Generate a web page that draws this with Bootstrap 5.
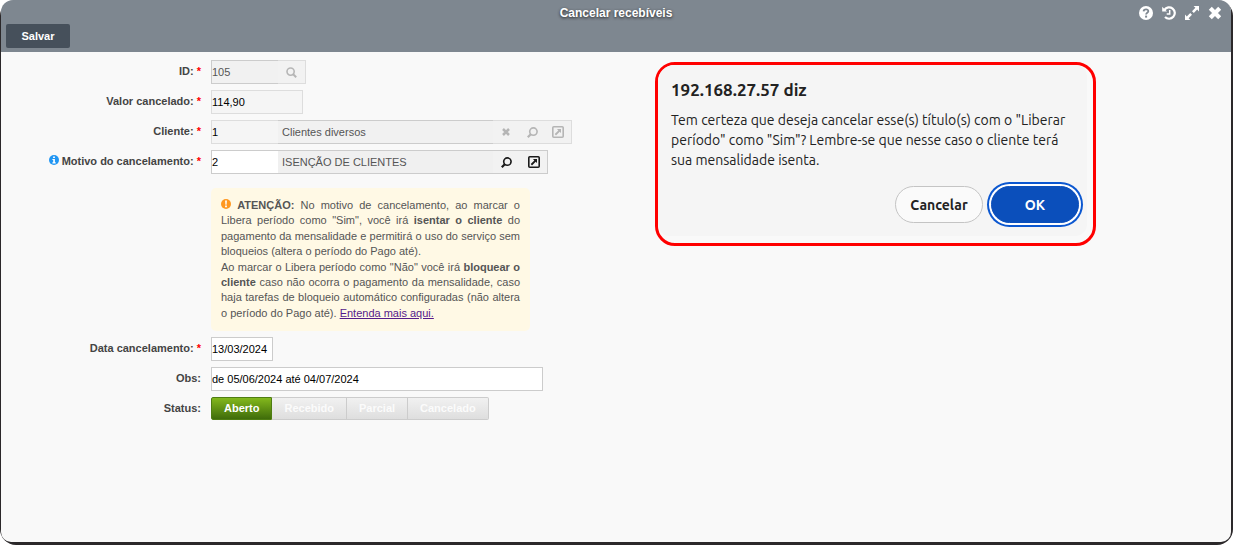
<!DOCTYPE html>
<html lang="pt-BR">
<head>
<meta charset="utf-8">
<meta name="viewport" content="width=device-width, initial-scale=1">
<title>Cancelar recebíveis</title>
<link href="https://cdn.jsdelivr.net/npm/bootstrap@5.3.0/dist/css/bootstrap.min.css" rel="stylesheet">
<style>
body{font-family:"Liberation Sans",Arial,sans-serif;font-size:11px;line-height:22px;color:#444;background:#fff}
.desk{background:#2b282a;border-radius:16px;padding:0 2px 3px 1px}
.window{background:#f9f9f9;border-radius:12px 12px 10px 10px;overflow:hidden}
.titlebar{background:#7e8790;height:52px}
.title-line{display:grid;grid-template-columns:1fr auto 1fr;height:24px}
.window-title{font-size:12px;line-height:26px;font-weight:bold;color:#fff;text-shadow:0 1px 3px #222;margin:0}
.tools{gap:7px;padding:5px 8px 0 0}
.tool-btn{border:0;background:none;padding:0;width:16px;height:16px;display:flex;align-items:center;justify-content:center;color:#fff}
.save-btn{width:64px;height:24px;margin-left:5px;padding:0;border:0;border-radius:2px;background:#46505b;color:#fff;font-size:11px;line-height:24px;font-weight:bold}
.save-btn:hover{background:#3a434c;color:#fff}
.content-area{padding-top:8px}
.form-side{flex:0 1 654px;min-width:0}
.dialog-side{flex:0 1 441px;min-width:0}
.field-row{display:grid;grid-template-columns:200px minmax(0,1fr);column-gap:10px;margin-bottom:6px;min-height:24px}
.field-label{font-weight:bold;text-align:right;line-height:23px;white-space:nowrap}
.req{color:#f00}
.field-box{border:1px solid #ccc;border-radius:0;background:#fff;height:24px;padding:0;font-size:11px;line-height:22px;color:#000;min-width:0}
.field-box:disabled{background:#f5f5f5;border-color:#ddd;color:#000;opacity:1}
.code{width:67px;border-right:0}
.w-value{width:92px}.w-date{width:62px}.w-obs{width:332px}
.shown-name{width:215px;border-left:0;border-right:0;background:#f0f0f0;padding-left:4px;color:#555}
.shown-name:disabled,.code-grey:disabled{background:#f1f1f1;border-color:#ccc;color:#555}
.lookup{height:24px;border:1px solid #ddd;border-left:0;background:#f2f2f2;color:#b5b5b5}
.lookup.active{border-color:#ccc;color:#1a1a1a}
.lookup button{border:0;background:none;padding:0;width:27px;height:22px;display:flex;align-items:center;justify-content:center;color:inherit}
.lookup.three button{width:26px}
.notice{width:319px;max-width:100%;border:0;border-radius:5px;background:#fff9e5;color:#555;padding:10px;margin:8px 0 0;line-height:1.4;text-align:justify}
.notice a{color:#551a8b}
.states{height:23px}
.states label{height:23px;padding:0 12px;border:1px solid #ccc;border-left-width:0;font-size:11px;line-height:20px;font-weight:bold;color:#fbfbfb;background:linear-gradient(#f1f1f1,#dedede);cursor:pointer}
.states label:last-child{border-radius:0 2px 2px 0}
.states label:first-of-type{border-left-width:1px;border-radius:2px 0 0 2px}
.states .btn-check:checked+label{background:linear-gradient(#83b81d,#3f6c0a);border-color:#4e7d12;color:#fff}
.confirm-frame{border:3px solid #f00;border-radius:20px;padding:0 6px 7px 0;margin-top:2px}
.confirm-box{background:#f5f5f5;border-radius:16px 12px 12px 12px;padding:13px 8px 13px 13px;color:#222;font-family:Ubuntu,Roboto,sans-serif}
.confirm-box h2{font-family:Ubuntu,"Noto Sans",sans-serif;font-size:17px;line-height:24px;font-weight:600;margin:0 0 8px}
.confirm-box p{font-size:14px;line-height:20px;margin:0 0 16px}
.pill{width:88px;height:37px;border:1px solid #c4c4c4;border-radius:19px;background:#fafafa;color:#222;font-size:14px;line-height:20px;font-weight:600;padding:0}
.pill.ok{background:#0b4fbb;border-color:#0b4fbb;color:#fff;box-shadow:0 0 0 2px #fff,0 0 0 4px #0b57d0}
.space-below{height:115px}
</style>
</head>
<body>
<div class="desk">
<main class="window">
  <header class="titlebar">
    <div class="title-line">
      <span></span>
      <h1 class="window-title">Cancelar recebíveis</h1>
      <div class="tools d-flex justify-content-end">
        <button class="tool-btn" aria-label="Ajuda"><svg width="14" height="14" viewBox="0 0 14 14"><circle cx="7" cy="7" r="7" fill="currentColor"/><path d="M4.6 5.4C4.8 2.6 9.6 2.8 9.3 5.4 9.1 6.9 7.1 6.7 7.1 8.6" fill="none" stroke="#7e8790" stroke-width="1.8"/><rect x="6.1" y="9.6" width="2" height="2" fill="#7e8790"/></svg></button>
        <button class="tool-btn" aria-label="Histórico"><svg width="14" height="14" viewBox="0 0 14 14" fill="none" stroke="currentColor"><path d="M2.4 3.8A5.7 5.7 0 1 1 3 11" stroke-width="2.2"/><path d="M.2.8v4.8H5z" fill="currentColor" stroke="none"/><path d="M7.7 4v4H4.7" stroke-width="1.5"/></svg></button>
        <button class="tool-btn" aria-label="Expandir"><svg width="14" height="14" viewBox="0 0 14 14" fill="currentColor"><path d="M8.6 0H14v5.4l-1.8-1.8-3.4 3.4-1.8-1.8 3.4-3.4zM5.4 14H0V8.6l1.8 1.8L5.2 7 7 8.8l-3.4 3.4z"/></svg></button>
        <button class="tool-btn" aria-label="Fechar"><svg width="14" height="14" viewBox="0 0 14 14"><path d="M2.3 2.3l9.4 9.4m0-9.4l-9.4 9.4" stroke="currentColor" stroke-width="4.2"/></svg></button>
      </div>
    </div>
    <button class="btn save-btn d-block">Salvar</button>
  </header>
  <div class="content-area d-flex align-items-start">
    <form class="form-side">
      <div class="field-row">
        <label class="field-label" for="fid">ID: <span class="req">*</span></label>
        <div class="d-flex"><input id="fid" class="field-box code code-grey" value="105" disabled>
          <div class="lookup d-flex"><button type="button" disabled aria-label="Buscar ID"><svg width="11" height="11" viewBox="0 0 11 11" fill="none" stroke="currentColor"><circle cx="4.6" cy="4.6" r="3.6" stroke-width="1.6"/><path d="M7.2 7.2l3 3" stroke-width="2"/></svg></button></div></div>
      </div>
      <div class="field-row">
        <label class="field-label" for="fval">Valor cancelado: <span class="req">*</span></label>
        <div class="d-flex"><input id="fval" class="field-box w-value" value="114,90" disabled></div>
      </div>
      <div class="field-row">
        <label class="field-label" for="fcli">Cliente: <span class="req">*</span></label>
        <div class="d-flex"><input id="fcli" class="field-box code" value="1" disabled><input class="field-box shown-name" aria-label="Nome do cliente" value="Clientes diversos" disabled>
          <div class="lookup three d-flex"><button type="button" disabled aria-label="Limpar"><svg width="8" height="8" viewBox="0 0 8 8"><path d="M1 1l6 6m0-6L1 7" stroke="currentColor" stroke-width="2.5"/></svg></button><button type="button" disabled aria-label="Buscar cliente"><svg width="11" height="11" viewBox="0 0 11 11" fill="none" stroke="currentColor"><circle cx="6.4" cy="4.6" r="3.7" stroke-width="1.6"/><path d="M3.8 7.2L.8 10.2" stroke-width="2.2"/></svg></button><button type="button" disabled aria-label="Abrir cliente"><svg width="12" height="12" viewBox="0 0 12 12"><rect x=".8" y=".8" width="10.4" height="10.4" rx="1" fill="none" stroke="currentColor" stroke-width="1.6"/><path d="M5 3h4v4L7.7 5.7 4 9.4 2.7 8l3.6-3.6z" fill="currentColor"/></svg></button></div></div>
      </div>
      <div class="field-row">
        <label class="field-label" for="fmot"><svg width="10" height="10" viewBox="0 0 10 10" class="align-baseline"><circle cx="5" cy="5" r="5" fill="#2196f3"/><path d="M4.1 1.5h1.8v1.6H4.1zM3.4 4h2.5v3.3h.8v1.1H3.4V7.3h.8V5.1h-.8z" fill="#fff"/></svg> Motivo do cancelamento: <span class="req">*</span></label>
        <div class="d-flex"><input id="fmot" class="field-box code" value="2"><input class="field-box shown-name" aria-label="Nome do motivo" value="ISENÇÃO DE CLIENTES" readonly>
          <div class="lookup active d-flex"><button type="button" aria-label="Buscar motivo"><svg width="11" height="11" viewBox="0 0 11 11" fill="none" stroke="currentColor"><circle cx="6.4" cy="4.6" r="3.7" stroke-width="1.6"/><path d="M3.8 7.2L.8 10.2" stroke-width="2.2"/></svg></button><button type="button" aria-label="Abrir motivo"><svg width="12" height="12" viewBox="0 0 12 12"><rect x=".8" y=".8" width="10.4" height="10.4" rx="1" fill="none" stroke="currentColor" stroke-width="1.6"/><path d="M5 3h4v4L7.7 5.7 4 9.4 2.7 8l3.6-3.6z" fill="currentColor"/></svg></button></div></div>
      </div>
      <div class="field-row">
        <span></span>
        <div class="alert notice"><svg width="10" height="10" viewBox="0 0 10 10" class="align-baseline"><circle cx="5" cy="5" r="5" fill="#ff9820"/><path d="M4.1 1.5h1.8l-.3 4.2H4.4zM4.1 6.6h1.8v1.7H4.1z" fill="#fff"/></svg> <b>ATENÇÃO:</b> No motivo de cancelamento, ao marcar o Libera período como "Sim", você irá <b>isentar o cliente</b> do pagamento da mensalidade e permitirá o uso do serviço sem bloqueios (altera o período do Pago até).<br>Ao marcar o Libera período como "Não" você irá <b>bloquear o cliente</b> caso não ocorra o pagamento da mensalidade, caso haja tarefas de bloqueio automático configuradas (não altera o período do Pago até). <a href="#">Entenda mais aqui.</a></div>
      </div>
      <div class="field-row">
        <label class="field-label" for="fdat">Data cancelamento: <span class="req">*</span></label>
        <div class="d-flex"><input id="fdat" class="field-box w-date" value="13/03/2024"></div>
      </div>
      <div class="field-row">
        <label class="field-label" for="fobs">Obs:</label>
        <div class="d-flex"><input id="fobs" class="field-box w-obs" value="de 05/06/2024 até 04/07/2024"></div>
      </div>
      <div class="field-row">
        <span class="field-label" id="lst">Status:</span>
        <div class="states d-flex" role="radiogroup" aria-labelledby="lst">
          <input class="btn-check" type="radio" name="st" id="s1" checked><label for="s1">Aberto</label>
          <input class="btn-check" type="radio" name="st" id="s2"><label for="s2">Recebido</label>
          <input class="btn-check" type="radio" name="st" id="s3"><label for="s3">Parcial</label>
          <input class="btn-check" type="radio" name="st" id="s4"><label for="s4">Cancelado</label>
        </div>
      </div>
      <div class="space-below"></div>
    </form>
    <aside class="dialog-side">
      <div class="confirm-frame">
        <section class="confirm-box" role="alertdialog" aria-labelledby="dt">
          <h2 id="dt">192.168.27.57 diz</h2>
          <p>Tem certeza que deseja cancelar esse(s) título(s) com o "Liberar período" como "Sim"? Lembre-se que nesse caso o cliente terá sua mensalidade isenta.</p>
          <div class="d-flex justify-content-end gap-2">
            <button class="pill">Cancelar</button><button class="pill ok">OK</button>
          </div>
        </section>
      </div>
    </aside>
  </div>
</main>
</div>
<script src="https://cdn.jsdelivr.net/npm/bootstrap@5.3.0/dist/js/bootstrap.bundle.min.js"></script>
</body>
</html>
